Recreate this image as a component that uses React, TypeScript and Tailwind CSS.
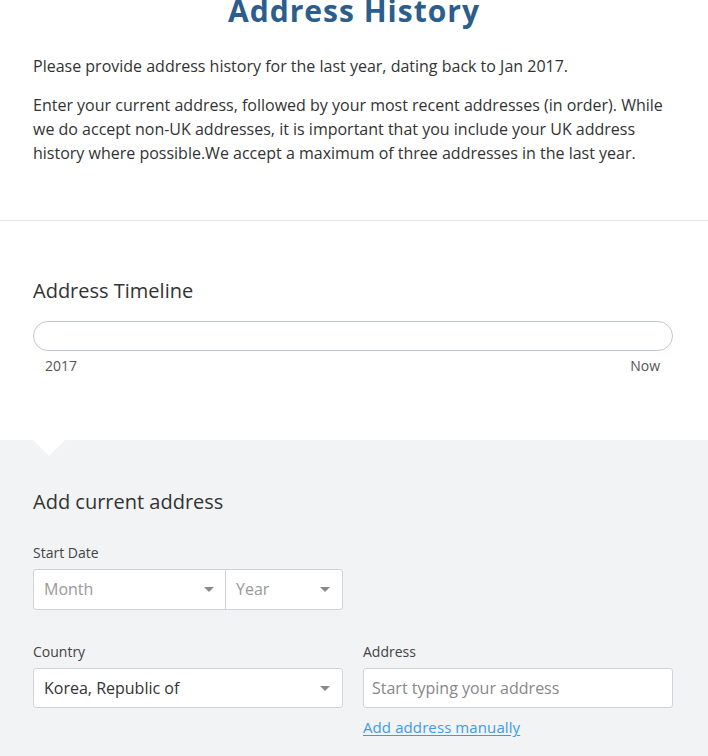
import React from "react";

const Caret = () => (
  <svg width="10" height="5" viewBox="0 0 10 5" className="shrink-0">
    <path d="M0 0 L10 0 L5 5 Z" fill="#8a8a8a" />
  </svg>
);

export default function App() {
  return (
    <div className="w-[708px] min-h-[756px] bg-white text-[#333] overflow-hidden" style={{ fontFamily: '"Open Sans", sans-serif' }}>
      <div className="px-[33px]">
        <h1 className="mt-[-7px] text-center text-[30px] leading-[36px] font-bold tracking-[1px] text-[#2b5e8c]">Address History</h1>
        <p className="mt-[25px] text-[16px] leading-[24px]">Please provide address history for the last year, dating back to Jan 2017.</p>
        <p className="mt-[15px] text-[16px] leading-[24px]">
          Enter your current address, followed by your most recent addresses (in order). While we do accept non-UK addresses, it is important that you include your UK address history where possible.We accept a maximum of three addresses in the last year.
        </p>
      </div>
      <div className="mt-[55px] h-px bg-[#e3e3e3]" />
      <div className="px-[33px] pt-[56px] pb-[64px]">
        <h2 className="text-[20px] leading-[28px] text-[#333]">Address Timeline</h2>
        <div className="mt-[16px] w-[640px] h-[30px] rounded-full border border-[#c3c8ce] bg-white" />
        <div className="mt-[5px] w-[640px] flex justify-between pl-[12px] pr-[13px] text-[14px] leading-[20px] text-[#555]">
          <span>2017</span>
          <span>Now</span>
        </div>
      </div>
      <div className="relative bg-[#f2f3f5] px-[33px] pt-[48px] pb-[20px]">
        <div className="absolute left-[33px] top-0 w-0 h-0 border-l-[16px] border-r-[16px] border-t-[16px] border-l-transparent border-r-transparent border-t-white" />
        <h2 className="text-[20px] leading-[28px] text-[#333]">Add current address</h2>
        <div className="mt-[27px] text-[14px] leading-[20px] text-[#444]">Start Date</div>
        <div className="mt-[6px] w-[310px] h-[41px] flex bg-white border border-[#cfd3d7] rounded-[3px]">
          <div className="w-[192px] flex items-center justify-between pl-[10px] pr-[11px] border-r border-[#cfd3d7]">
            <span className="text-[16px] text-[#999] mt-[-2px]">Month</span>
            <Caret />
          </div>
          <div className="flex-1 flex items-center justify-between pl-[10px] pr-[12px]">
            <span className="text-[16px] text-[#999] mt-[-2px]">Year</span>
            <Caret />
          </div>
        </div>
        <div className="mt-[32px] grid grid-cols-[310px_310px] gap-x-[20px]">
          <div>
            <div className="text-[14px] leading-[20px] text-[#444]">Country</div>
            <div className="mt-[6px] h-[40px] flex items-center justify-between bg-white border border-[#cfd3d7] rounded-[3px] pl-[10px] pr-[12px]">
              <span className="text-[16px] text-[#333]">Korea, Republic of</span>
              <Caret />
            </div>
          </div>
          <div>
            <div className="text-[14px] leading-[20px] text-[#444]">Address</div>
            <div className="mt-[6px] h-[40px] flex items-center bg-white border border-[#cfd3d7] rounded-[3px] pl-[8px]">
              <span className="text-[16px] text-[#888]">Start typing your address</span>
            </div>
            <div className="mt-[9px] text-[15px] leading-[20px] tracking-[0.1px] text-[#3d9be9] underline underline-offset-2">Add address manually</div>
          </div>
        </div>
      </div>
    </div>
  );
}
